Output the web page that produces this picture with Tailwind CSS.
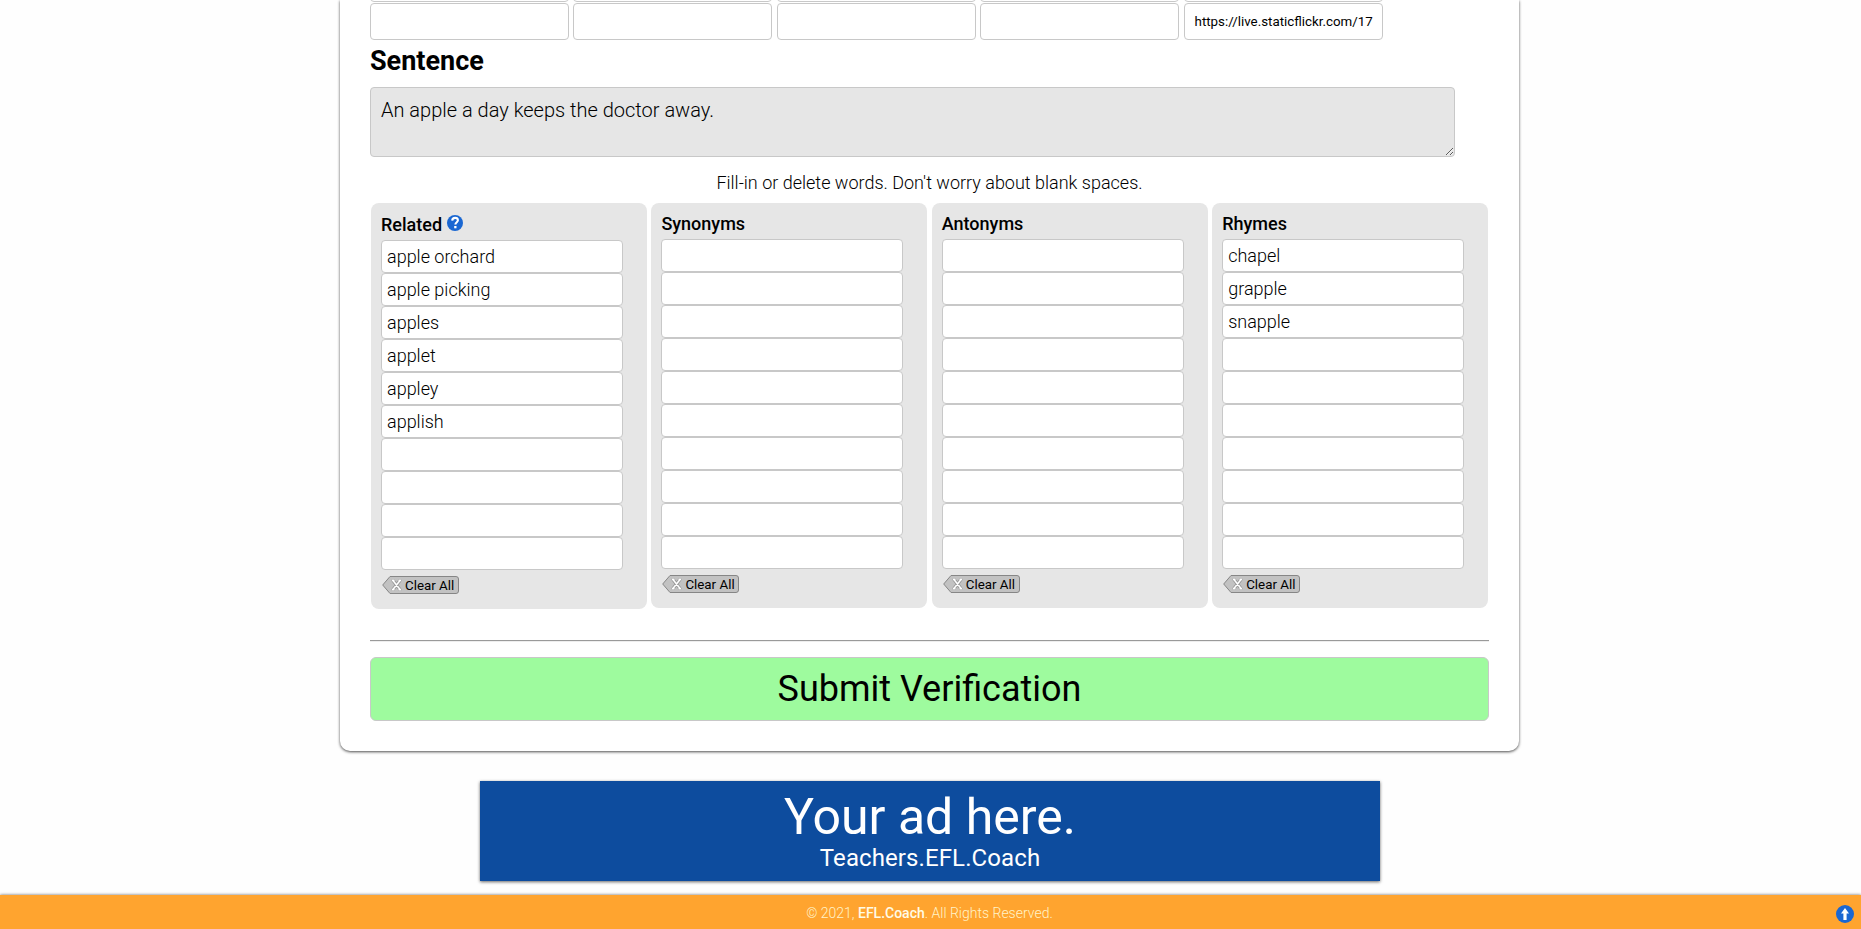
<!DOCTYPE html>
<html lang="en">
<head>
<meta charset="utf-8">
<title>EFL.Coach</title>
<script src="https://cdn.jsdelivr.net/npm/@tailwindcss/browser@4"></script>
</head>
<body class="h-[929px] overflow-hidden bg-[#fefefe] font-[Roboto,sans-serif] text-black">
<div class="flex h-[929px] flex-col">
  <main class="ml-[340px] h-[751px] w-[1179px] rounded-b-[10px] bg-white px-[30px] shadow-[0_1px_3px_rgba(0,0,0,0.7)]">
    <div class="h-[2px] overflow-hidden"><div id="prev" class="-mt-[35px] flex gap-[4.4px]"></div></div>
    <div id="row" class="mt-px flex gap-[4.4px]"></div>
    <h2 class="mt-[5px] h-[32px] text-[27px] leading-[32px] font-bold">Sentence</h2>
    <textarea spellcheck="false" class="mt-[10px] block h-[70px] w-[1085px] resize rounded border border-[#c8c8c8] bg-[#e6e6e6] px-[10px] py-[10px] text-[20px] leading-[24px] font-light">An apple a day keeps the doctor away.</textarea>
    <p class="mt-[14px] h-[24px] text-center text-[18px] leading-[24px] font-light">Fill-in or delete words. Don't worry about blank spaces.</p>
    <div id="cols" class="mt-[8px] ml-px flex h-[406px] items-start gap-[4.4px]"></div>
    <div class="mt-[31px] h-[2px] border-t border-b border-t-[#9a9a9a] border-b-[#eeeeee]"></div>
    <button class="mt-[15px] block h-[64px] w-full rounded-[6px] border border-[#c8c8c8] bg-[#9efb9e] text-[36px] leading-[60px]">Submit Verification</button>
  </main>
  <section class="mt-[30px] ml-[480px] flex h-[100px] w-[900px] flex-col items-center bg-[#0d4c9e] text-white shadow-[0_1px_3px_rgba(0,0,0,0.6)]">
    <div class="mt-[7px] h-[56px] text-[50px] leading-[58px]">Your ad here.</div>
    <div class="text-[24px] leading-[28px] tracking-[0.1px]">Teachers.EFL.Coach</div>
  </section>
  <footer class="mt-[14px] flex h-[34px] items-center bg-[#ffa42f] pr-[7px] shadow-[0_0_3px_rgba(0,0,0,0.6)]">
    <p class="flex-1 pt-[2px] pl-[23px] text-center text-[14px] leading-[20px] font-light text-[#fff3c8]">© 2021, <b class="font-medium text-[#fffbe6]">EFL.Coach</b>. All Rights Reserved.</p>
    <svg class="mt-[4px] h-[18px] w-[18px]" viewBox="0 0 18 18"><circle cx="9" cy="9" r="9" fill="#1a67d2"/><path d="M9 3 13 8.5H10.6V15H7.4V8.5H5Z" fill="#fff"/></svg>
  </footer>
</div>
<script>
const cell = v => `<div class="h-[37px] w-[199px] shrink-0 overflow-hidden rounded border border-[#c8c8c8] bg-white px-[10px] text-[13.33px] leading-[35px] whitespace-nowrap">${v}</div>`;
document.getElementById('prev').innerHTML = ['', '', '', '', ''].map(cell).join('');
document.getElementById('row').innerHTML = ['', '', '', '', 'https://live.staticflickr.com/17'].map(cell).join('');
const help = `<svg class="mb-[5px] ml-[5px] h-[16px] w-[16px]" viewBox="0 0 16 16"><circle cx="8" cy="8" r="8" fill="#1a67d2"/><path d="M5.2 5.6C5.3 3.8 6.5 2.9 8.1 2.9s2.8 1 2.8 2.4c0 1.8-2.5 2-2.5 4.3" fill="none" stroke="#fff" stroke-width="2.1"/><rect x="7.2" y="11" width="2.3" height="2.3" fill="#fff"/></svg>`;
const data = [['Related', ['apple orchard', 'apple picking', 'apples', 'applet', 'appley', 'applish']], ['Synonyms', []], ['Antonyms', []], ['Rhymes', ['chapel', 'grapple', 'snapple']]];
document.getElementById('cols').innerHTML = data.map(([t, w], i) => `
<div class="w-[276px] shrink-0 rounded-[8px] bg-[#e6e6e6] pl-[10px] ${i ? 'h-[405px] pt-[9px]' : 'h-[406px] pt-[10px]'}">
  <div class="flex h-[27px] items-center pb-[3px] text-[18px] leading-[22px] font-medium">${t}${i ? '' : help}</div>
  ${Array.from({length: 10}, (_, k) => `<div class="h-[33px] w-[242px] rounded border border-[#c8c8c8] bg-white px-[5px] text-[18px] leading-[31px] font-light">${w[k] || ''}</div>`).join('')}
  <div class="relative mt-[6px] ml-px h-[18px] w-[77px]">
    <svg class="absolute inset-0 h-[18px] w-[77px]" viewBox="0 0 77 18"><path d="M.7 9 8 .5H74a2.5 2.5 0 0 1 2.5 2.5V15a2.5 2.5 0 0 1-2.5 2.5H8Z" fill="#c2c2c2" stroke="#868686"/><path d="M11 4.5 18 13.5M18 4.5 11 13.5" stroke="#9a9a9a" stroke-width="3.4"/><path d="M9.5 4.5h3.5M16 4.5h3.5M9.5 13.5h3.5M16 13.5h3.5" stroke="#a0a0a0" stroke-width="1.6"/><path d="M11 4.5 18 13.5M18 4.5 11 13.5M10 4.5h2.5M16.5 4.5h2.5M10 13.5h2.5M16.5 13.5h2.5" stroke="#fff" stroke-width="1.5"/></svg>
    <span class="absolute top-px left-[23px] text-[13.33px] leading-[18px] whitespace-nowrap">Clear All</span>
  </div>
</div>`).join('');
</script>
</body>
</html>
